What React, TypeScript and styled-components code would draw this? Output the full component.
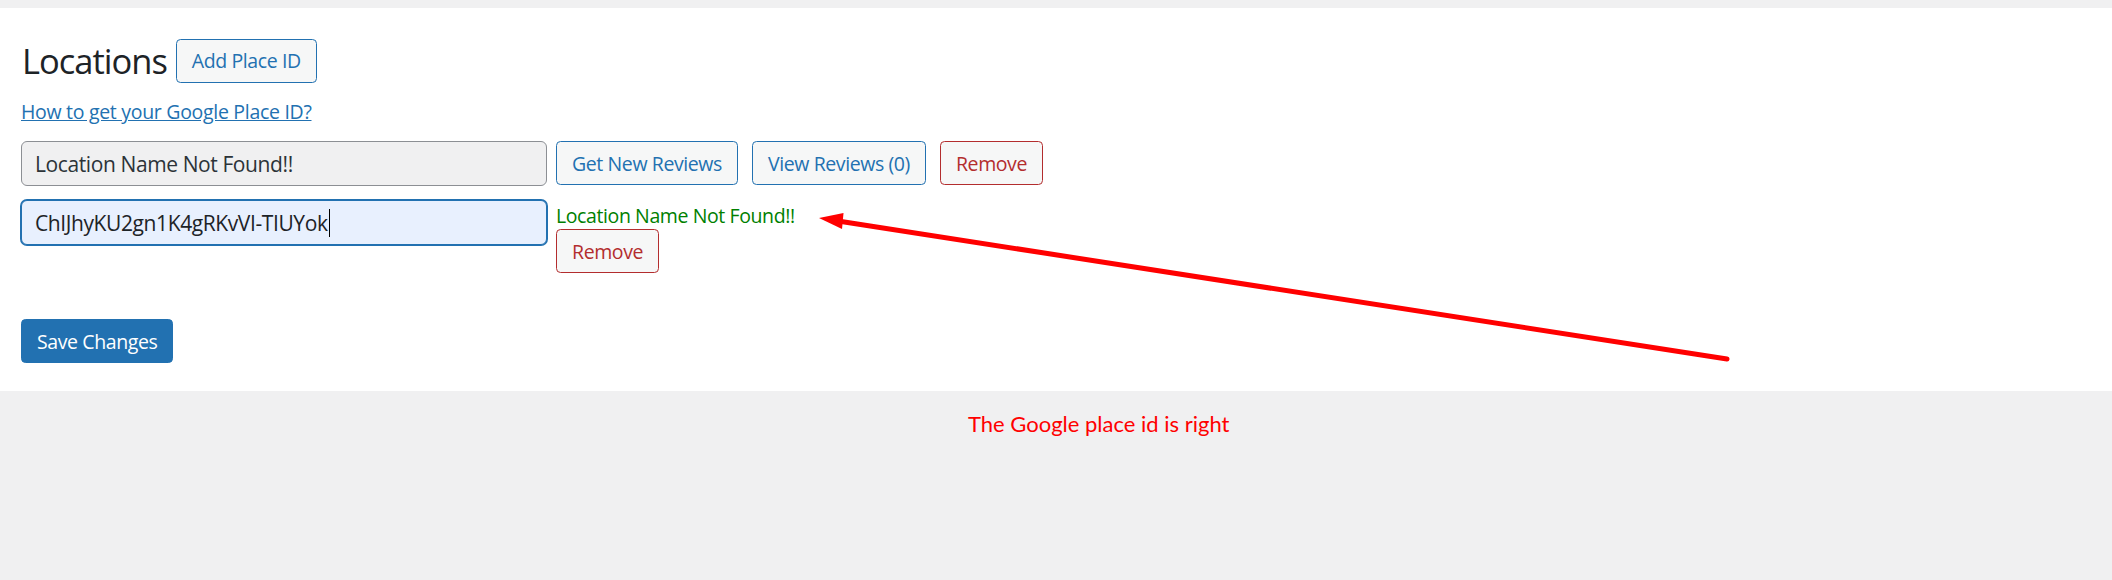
import styled, { createGlobalStyle } from "styled-components";

const GlobalStyle = createGlobalStyle`
  html, body {
    margin: 0;
    background: #f0f0f1;
  }
  body {
    font-family: "Open Sans", "Noto Sans", sans-serif;
    letter-spacing: -0.4px;
    color: #2c3338;
  }
`;

const Page = styled.div`
  position: relative;
  width: 2112px;
  height: 580px;
  padding-top: 8px;
  box-sizing: border-box;
  overflow: hidden;
`;

const Panel = styled.div`
  background: #fff;
  height: 383px;
  box-sizing: border-box;
  padding: 30px 21px 0;
`;

const HeadingRow = styled.div`
  display: flex;
  align-items: center;
  gap: 9px;
`;

const Title = styled.h1`
  margin: 0 0 0 1px;
  font-size: 34.5px;
  font-weight: 400;
  line-height: 45px;
  letter-spacing: -1px;
  color: #1d2327;
`;

const Button = styled.button<{ $tone?: "blue" | "red" | "primary" }>`
  display: inline-flex;
  align-items: center;
  box-sizing: border-box;
  height: 44px;
  padding: 0 15px;
  font-family: inherit;
  font-size: 19.5px;
  letter-spacing: inherit;
  border-radius: 4.5px;
  border: 1px solid
    ${(p) => (p.$tone === "red" ? "#b32d2e" : "#2271b1")};
  color: ${(p) =>
    p.$tone === "red" ? "#b32d2e" : p.$tone === "primary" ? "#fff" : "#2271b1"};
  background: ${(p) => (p.$tone === "primary" ? "#2271b1" : "#f6f7f7")};
  cursor: pointer;
  white-space: nowrap;
`;

const HelpLink = styled.a`
  display: block;
  width: max-content;
  margin-top: 15px;
  font-size: 19.5px;
  line-height: 27px;
  letter-spacing: -0.3px;
  color: #2271b1;
  text-decoration: underline;
`;

const Row = styled.div<{ $top: number }>`
  display: flex;
  align-items: flex-start;
  margin-top: ${(p) => p.$top}px;
`;

const Actions = styled.div`
  display: flex;
  gap: 14px;
  margin-left: 9px;
`;

const NameInput = styled.input`
  box-sizing: border-box;
  width: 526px;
  height: 45px;
  margin: 0;
  padding: 0 13px;
  font-family: inherit;
  font-size: 21px;
  letter-spacing: inherit;
  color: #2c3338;
  background: #f0f0f1;
  border: 1px solid #8c8f94;
  border-radius: 6px;
  outline: none;
`;

const FocusField = styled.div`
  box-sizing: border-box;
  display: flex;
  align-items: center;
  width: 526px;
  height: 45px;
  padding: 0 13px;
  font-size: 21px;
  color: #1d2327;
  background: #e8f0fe;
  border: 1px solid #2271b1;
  box-shadow: 0 0 0 1px #2271b1;
  border-radius: 6px;
`;

const Caret = styled.span`
  display: inline-block;
  width: 1px;
  height: 28px;
  margin-left: 1px;
  background: #000;
`;

const StatusColumn = styled.div`
  display: flex;
  flex-direction: column;
  align-items: flex-start;
  margin-left: 9px;
  padding-top: 2px;
`;

const Status = styled.span`
  font-size: 19.5px;
  line-height: 27px;
  color: #008000;
`;

const Note = styled.p`
  margin: 18px 0 0 968px;
  font-family: Lato, "Open Sans", sans-serif;
  font-size: 22px;
  line-height: 30px;
  letter-spacing: 0;
  color: #ff0000;
`;

const Annotation = styled.svg`
  position: absolute;
  left: 0;
  top: 0;
  pointer-events: none;
`;

export default function App() {
  return (
    <>
      <GlobalStyle />
      <Page>
        <Panel>
          <HeadingRow>
            <Title>Locations</Title>
            <Button>Add Place ID</Button>
          </HeadingRow>
          <HelpLink href="#">How to get your Google Place ID?</HelpLink>

          <Row $top={16}>
            <NameInput readOnly value="Location Name Not Found!!" />
            <Actions>
              <Button>Get New Reviews</Button>
              <Button>View Reviews (0)</Button>
              <Button $tone="red">Remove</Button>
            </Actions>
          </Row>

          <Row $top={14}>
            <FocusField>
              ChIJhyKU2gn1K4gRKvVI-TIUYok
              <Caret />
            </FocusField>
            <StatusColumn>
              <Status>Location Name Not Found!!</Status>
              <Button $tone="red">Remove</Button>
            </StatusColumn>
          </Row>

          <Row $top={46}>
            <Button $tone="primary">Save Changes</Button>
          </Row>
        </Panel>

        <Note>The Google place id is right</Note>

        <Annotation width="2112" height="580" viewBox="0 0 2112 580">
          <line
            x1="838"
            y1="221"
            x2="1727"
            y2="359"
            stroke="#ff0000"
            strokeWidth="5"
            strokeLinecap="round"
          />
          <polygon points="819,218 843.5,213 842,229" fill="#ff0000" />
        </Annotation>
      </Page>
    </>
  );
}
